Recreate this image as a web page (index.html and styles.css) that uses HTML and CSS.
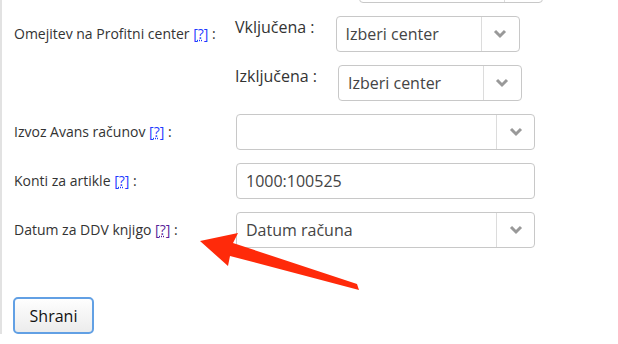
FILE: index.html
```html
<!DOCTYPE html>
<html>
<head>
    <title>Nastavitve</title>
    <link rel="stylesheet" href="styles.css">
</head>
<body>
    <div class="page">
        <div class="form">
            <!-- end of the previous group, scrolled out of view -->
            <div class="row row-cut">
                <div class="label"></div>
                <div class="sub">
                    <span class="sub-label"></span>
                    <div class="select select-small">
                        <span class="value"></span>
                        <span class="caret"></span>
                    </div>
                </div>
            </div>

            <div class="row">
                <div class="label">Omejitev na Profitni center <a href="#help-pc" class="help">[<u>?</u>]</a> :</div>
                <div class="group">
                    <div class="sub">
                        <span class="sub-label">Vključena :</span>
                        <div class="select select-small">
                            <span class="value">Izberi center</span>
                            <span class="caret"><svg width="14" height="10" viewBox="0 0 14 10"><path d="M2 2 L7 7 L12 2" /></svg></span>
                        </div>
                    </div>
                    <div class="sub">
                        <span class="sub-label">Izključena :</span>
                        <div class="select select-small">
                            <span class="value">Izberi center</span>
                            <span class="caret"><svg width="14" height="10" viewBox="0 0 14 10"><path d="M2 2 L7 7 L12 2" /></svg></span>
                        </div>
                    </div>
                </div>
            </div>

            <div class="row">
                <div class="label">Izvoz Avans računov <a href="#help-avans" class="help">[<u>?</u>]</a> :</div>
                <div class="select">
                    <span class="value"></span>
                    <span class="caret"><svg width="14" height="10" viewBox="0 0 14 10"><path d="M2 2 L7 7 L12 2" /></svg></span>
                </div>
            </div>

            <div class="row">
                <div class="label">Konti za artikle <a href="#help-konti" class="help">[<u>?</u>]</a> :</div>
                <input class="text" type="text" value="1000:100525">
            </div>

            <div class="row">
                <div class="label">Datum za DDV knjigo <a href="#help-ddv" class="help visited">[<u>?</u>]</a> :</div>
                <div class="select">
                    <span class="value">Datum računa</span>
                    <span class="caret"><svg width="14" height="10" viewBox="0 0 14 10"><path d="M2 2 L7 7 L12 2" /></svg></span>
                </div>
            </div>
        </div>

        <button class="btn">Shrani</button>
    </div>

    <!-- annotation arrow drawn over the screenshot -->
    <svg class="arrow" width="618" height="344" viewBox="0 0 618 344">
        <polygon points="200,241 238,233 233,243 357,284 359,290 230,256 228,266" />
    </svg>
</body>
</html>
```

FILE: styles.css
```css
body {
    margin: 0;
    font-family: "Open Sans", "DejaVu Sans", sans-serif;
    color: #333;
    background-color: #fff;
    overflow: hidden;
}

.page {
    border-left: 2px solid #e2e2e2;
    min-height: 344px;
    padding-left: 12px;
    box-sizing: border-box;
}

.form {
    margin-top: -33px;
    display: flex;
    flex-direction: column;
    gap: 13px;
}

.row {
    display: grid;
    grid-template-columns: 222px auto;
    align-items: start;
}

.row-cut .sub-label {
    width: 103px;
}

.label {
    font-size: 14px;
    line-height: 20px;
    padding-top: 8px;
}

.help,
.help:visited {
    color: #1f3bff;
    text-decoration: none;
}

.help u {
    text-decoration: underline dotted;
}

.help.visited,
.help.visited:visited {
    color: #5a1f99;
}

.group {
    display: flex;
    flex-direction: column;
    gap: 13px;
}

.sub {
    display: flex;
    align-items: flex-start;
}

.sub-label {
    font-size: 16px;
    line-height: 22px;
    margin-left: -1px;
    margin-right: 21px;
}

.select,
.text {
    box-sizing: border-box;
    width: 299px;
    height: 36px;
    border: 1px solid #c8c8c8;
    border-radius: 4px;
    background-color: #fff;
    font-family: "Open Sans", "DejaVu Sans", sans-serif;
    font-size: 16px;
    color: #444;
}

.select {
    display: flex;
}

.select-small {
    width: 184px;
}

.select .value {
    flex: 1;
    padding-left: 9px;
    line-height: 34px;
    white-space: nowrap;
}

.select .caret {
    width: 37px;
    border-left: 1px solid #dcdcdc;
    display: flex;
    align-items: center;
    justify-content: center;
}

.caret path {
    fill: none;
    stroke: #999;
    stroke-width: 3;
}

.text {
    padding: 0 9px;
    outline: none;
}

.btn {
    margin-top: 49px;
    margin-left: -1px;
    width: 81px;
    height: 37px;
    border: 2px solid #62a0e4;
    border-radius: 5px;
    background: linear-gradient(#fefefe, #ececec);
    font-family: "Open Sans", "DejaVu Sans", sans-serif;
    font-size: 16px;
    color: #111;
    cursor: pointer;
}

.arrow {
    position: absolute;
    top: 0;
    left: 0;
    pointer-events: none;
}

.arrow polygon {
    fill: #ff2a0a;
}
```
